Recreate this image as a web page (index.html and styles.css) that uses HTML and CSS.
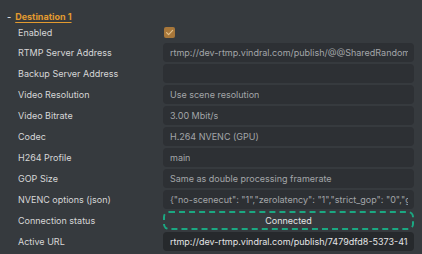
FILE: index.html
```html
<!DOCTYPE html>
<html>
<head>
<meta charset="utf-8">
<link rel="stylesheet" href="styles.css">
</head>
<body>
<div class="panel">
  <div class="header"><span class="dash">-</span><span class="title">Destination 1</span></div>
  <div class="grid">
    <div class="label">Enabled</div>
    <div class="cellcheck"><span class="check"><svg width="11" height="11" viewBox="0 0 11 11"><path d="M2.6 5.6 L4.6 7.6 L8.6 3.4" fill="none" stroke="#e2c08a" stroke-width="1.2" stroke-linecap="round" stroke-linejoin="round"/></svg></span></div>

    <div class="label">RTMP Server Address</div>
    <div class="field"><span class="txt">rtmp://dev-rtmp.vindral.com/publish/@@SharedRandomKey</span></div>

    <div class="label">Backup Server Address</div>
    <div class="field"></div>

    <div class="label">Video Resolution</div>
    <div class="field"><span class="txt">Use scene resolution</span></div>

    <div class="label">Video Bitrate</div>
    <div class="field"><span class="txt">3.00 Mbit/s</span></div>

    <div class="label">Codec</div>
    <div class="field"><span class="txt">H.264 NVENC (GPU)</span></div>

    <div class="label">H264 Profile</div>
    <div class="field"><span class="txt">main</span></div>

    <div class="label">GOP Size</div>
    <div class="field"><span class="txt">Same as double processing framerate</span></div>

    <div class="label">NVENC options (json)</div>
    <div class="field"><span class="txt">{"no-scenecut": "1","zerolatency": "1","strict_gop": "0","gpu": "0"}</span></div>

    <div class="label">Connection status</div>
    <div class="status">Connected</div>

    <div class="label">Active URL</div>
    <div class="field active"><span class="txt">rtmp://dev-rtmp.vindral.com/publish/7479dfd8-5373-41a2-9c1e</span></div>
  </div>
</div>
</body>
</html>
```
FILE: styles.css
```css
html, body {
  margin: 0;
  padding: 0;
  background: #363a3e;
  width: 422px;
  height: 254px;
  overflow: hidden;
}
body {
  font-family: Inter, "Noto Sans", sans-serif;
  font-size: 9px;
  color: #d6d7d8;
}
.panel {
  padding: 8px 8px 0 7px;
}
.header {
  height: 16px;
  display: flex;
  align-items: center;
  gap: 4px;
  font-size: 9px;
}
.dash {
  color: #d6d7d8;
  font-weight: 600;
}
.title {
  color: #e39a2f;
  font-weight: 700;
  text-decoration: underline;
  text-underline-offset: 2px;
  text-decoration-thickness: 1px;
}
.grid {
  display: grid;
  grid-template-columns: 156px 1fr;
  grid-template-rows: 17px;
  grid-auto-rows: 19px;
  row-gap: 2px;
}
.label {
  padding-left: 11px;
  display: flex;
  align-items: center;
  white-space: nowrap;
  color: #d6d7d8;
}
.cellcheck {
  display: flex;
  align-items: center;
  padding-left: 1px;
}
.check {
  width: 11px;
  height: 11px;
  border-radius: 2px;
  background: #a8773a;
  display: block;
}
.check svg { display: block; }
.field {
  background: #2d3034;
  border-radius: 4px;
  padding: 0 6px 0 7px;
  display: flex;
  align-items: center;
  min-width: 0;
  overflow: hidden;
  color: #a3a6a9;
}
.txt {
  display: block;
  white-space: nowrap;
  overflow: hidden;
  min-width: 0;
}
.field.active {
  background: #26292c;
  color: #e4e5e6;
}
.status {
  border: 2px dashed #1ba882;
  border-radius: 6px;
  display: flex;
  align-items: center;
  justify-content: center;
  color: #e4e5e6;
  box-sizing: border-box;
}
```
